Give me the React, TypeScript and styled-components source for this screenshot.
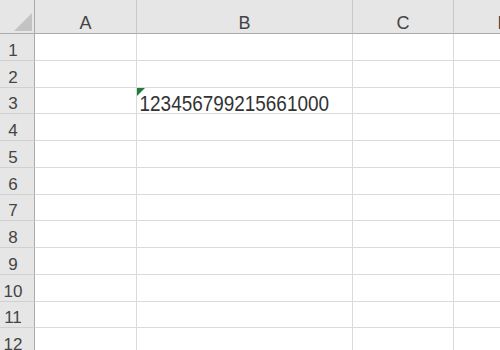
import React from "react";
import styled, { createGlobalStyle } from "styled-components";

const Global = createGlobalStyle`
  html, body { margin: 0; padding: 0; background: #ffffff; overflow: hidden; }
  body { font-family: "Liberation Sans", Arial, sans-serif; }
`;

const Sheet = styled.div`
  display: grid;
  grid-template-columns: 35px 102px 216px 101px 101px;
  grid-template-rows: 34px;
  grid-auto-rows: 26.77px;
  width: 600px;
  height: 350px;
  overflow: hidden;
`;

const Corner = styled.div`
  position: relative;
  background: #e6e6e6;
  border-right: 1px solid #ababab;
  border-bottom: 1px solid #ababab;
`;

const CornerMark = styled.div`
  position: absolute;
  right: 2px;
  bottom: 2px;
  width: 0;
  height: 0;
  border-left: 18px solid transparent;
  border-bottom: 18px solid #c3c3c3;
`;

const ColHeader = styled.div`
  display: flex;
  align-items: flex-end;
  justify-content: center;
  background: #e6e6e6;
  border-right: 1px solid #c8c8c8;
  border-bottom: 1px solid #ababab;
  font-size: 18px;
  line-height: 20px;
  color: #444444;
  overflow: hidden;
`;

const RowHeader = styled.div`
  display: flex;
  align-items: flex-end;
  justify-content: center;
  padding-right: 8px;
  background: #e6e6e6;
  border-right: 1px solid #ababab;
  border-bottom: 1px solid #d0d0d0;
  font-size: 17px;
  line-height: 18px;
  color: #444444;
  box-sizing: border-box;
`;

const Cell = styled.div`
  position: relative;
  display: flex;
  align-items: flex-end;
  background: #ffffff;
  border-right: 1px solid #dadada;
  border-bottom: 1px solid #dadada;
  min-width: 0;
`;

const TextMark = styled.div`
  position: absolute;
  left: 0;
  top: 0;
  width: 0;
  height: 0;
  border-top: 8px solid #1e7b3a;
  border-right: 8px solid transparent;
`;

const CellText = styled.span`
  position: relative;
  z-index: 1;
  display: inline-block;
  padding-left: 3px;
  margin-bottom: -2px;
  font-size: 22px;
  line-height: 22px;
  color: #333333;
  white-space: nowrap;
  transform: scaleX(0.86);
  transform-origin: left bottom;
`;

const columns = ["A", "B", "C", "D"];
const rows = Array.from({ length: 12 }, (_, i) => i + 1);

export default function App() {
  return (
    <>
      <Global />
      <Sheet>
        <Corner>
          <CornerMark />
        </Corner>
        {columns.map((c) => (
          <ColHeader key={c}>{c}</ColHeader>
        ))}
        {rows.map((r) => (
          <React.Fragment key={r}>
            <RowHeader>{r}</RowHeader>
            {columns.map((c) => (
              <Cell key={c}>
                {r === 3 && c === "B" && (
                  <>
                    <TextMark />
                    <CellText>123456799215661000</CellText>
                  </>
                )}
              </Cell>
            ))}
          </React.Fragment>
        ))}
      </Sheet>
    </>
  );
}
